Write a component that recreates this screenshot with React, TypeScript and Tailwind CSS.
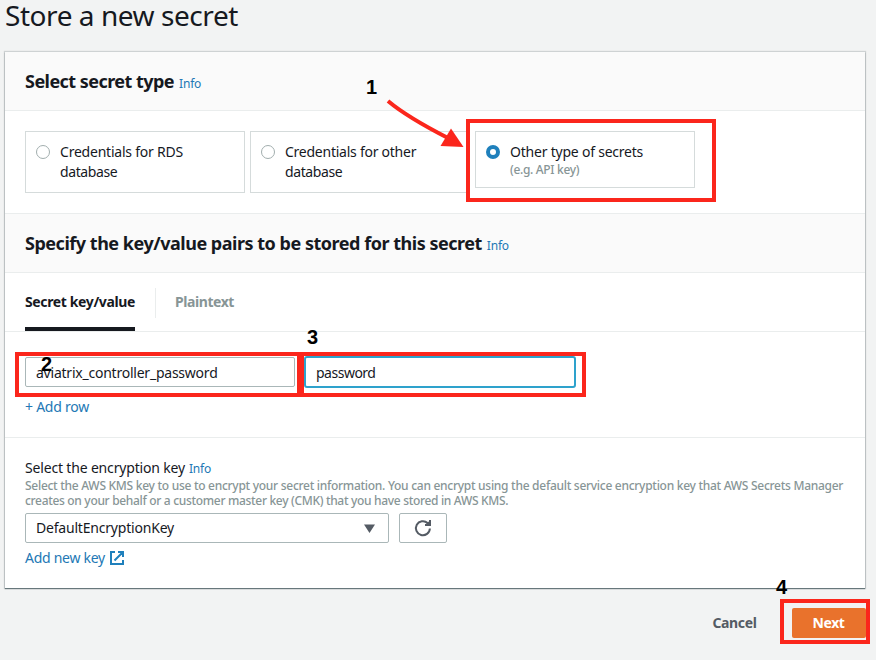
import type { ReactNode } from 'react';

function Info() {
  return <a className="text-[12px] font-normal tracking-[-0.2px] text-[#2378b5]">Info</a>;
}

function Radio({ checked = false }: { checked?: boolean }) {
  return (
    <span
      className={
        checked
          ? 'mt-[3px] size-3.5 shrink-0 rounded-full border-[4.5px] border-[#1f80bc] bg-white'
          : 'mt-[3px] size-3.5 shrink-0 rounded-full border border-[#a2aeae] bg-white'
      }
    />
  );
}

function SectionHeader({ children }: { children: ReactNode }) {
  return (
    <div className="flex h-[59px] items-baseline gap-[5px] border-b border-[#eaeded] bg-[#fafafa] pt-[15px] pl-5 leading-[28px]">
      {children}
    </div>
  );
}

// Numbered callout placed over the page.
function Marker({ n, className }: { n: number; className: string }) {
  return (
    <span className={`absolute font-['Liberation_Sans',Arial,sans-serif] text-[20px] leading-[20px] font-bold text-black ${className}`}>
      {n}
    </span>
  );
}

function Highlight({ className }: { className: string }) {
  return <div className={`pointer-events-none absolute border-4 border-[#fb261c] ${className}`} />;
}

export default function App() {
  return (
    <div className="relative h-[660px] w-[876px] overflow-hidden bg-[#f2f3f3] pl-[5px] font-['Noto_Sans','Open_Sans',sans-serif] text-[14px] whitespace-nowrap text-[#16191f]">
      <h1 className="h-[52px] text-[28px] leading-[31px] tracking-[-0.44px]">Store a new secret</h1>

      <main className="h-[536px] w-[860px] bg-white shadow-[0_1px_1px_0_rgba(0,28,36,0.5),0_0_1px_1px_rgba(0,28,36,0.15)]">
        <SectionHeader>
          <h2 className="text-[18px] font-bold tracking-[-0.54px]">Select secret type</h2>
          <Info />
        </SectionHeader>

        <div className="flex h-[103px] items-start gap-[5px] border-b border-[#eaeded] pt-5 pl-5 leading-5">
          <div className="flex h-[62px] w-[220px] gap-2.5 border border-[#d5dbdb] pt-[10px] pl-[10px]">
            <Radio />
            <p className="tracking-[-0.22px]">
              Credentials for RDS
              <br />
              <span className="tracking-[-0.4px]">database</span>
            </p>
          </div>
          <div className="flex h-[62px] w-[220px] gap-2.5 border border-[#d5dbdb] pt-[10px] pl-[10px]">
            <Radio />
            <p className="tracking-[-0.25px]">
              Credentials for other
              <br />
              <span className="tracking-[-0.4px]">database</span>
            </p>
          </div>
          <div className="flex h-[57px] w-[220px] gap-2.5 border border-[#d5dbdb] pt-[10px] pl-[10px]">
            <Radio checked />
            <div>
              <p className="tracking-[-0.22px]">Other type of secrets</p>
              <p className="text-[12px] leading-4 font-medium tracking-[-0.32px] text-[#879596]">(e.g. API key)</p>
            </div>
          </div>
        </div>

        <SectionHeader>
          <h2 className="text-[18px] font-bold tracking-[-0.48px]">
            Specify the key/value pairs to be stored for this secret
          </h2>
          <Info />
        </SectionHeader>

        <div className="flex h-[59px] border-b border-[#eaeded] pl-5 font-bold">
          <div className="h-[58px] w-[110px] border-b-4 border-[#16191f] pt-[19px] leading-5 tracking-[-0.37px]">
            Secret key/value
          </div>
          <div className="mt-[15px] ml-5 h-[30px] border-l border-[#eaeded] pt-1 pl-[19px] leading-5 tracking-[-0.43px] text-[#879596]">
            Plaintext
          </div>
        </div>

        <div className="h-[106px] border-b border-[#eaeded] pt-6 pl-5">
          <div className="flex items-center gap-[9px]">
            <div className="h-[30px] w-[270px] rounded-[2px] border border-[#aab7b8] pl-[10px] leading-[29px] tracking-[-0.23px]">
              aviatrix_controller_password
            </div>
            <div className="h-8 w-[272px] rounded-[3px] border-2 border-[#2ea2cc] pl-[10px] leading-[29px] tracking-[-0.5px]">
              password
            </div>
          </div>
          <a className="mt-[9px] block leading-5 tracking-[-0.24px] text-[#2378b5]">+ Add row</a>
        </div>

        <div className="pt-5 pl-5">
          <div className="flex h-5 items-baseline gap-1 leading-5">
            <span className="tracking-[-0.17px]">Select the encryption key</span>
            <Info />
          </div>
          <p className="text-[12px] leading-[15px] font-medium text-[#879596]">
            <span className="tracking-[-0.28px]">
              Select the AWS KMS key to use to encrypt your secret information. You can encrypt using the default service encryption key that AWS Secrets Manager
            </span>
            <br />
            <span className="tracking-[-0.32px]">
              creates on your behalf or a customer master key (CMK) that you have stored in AWS KMS.
            </span>
          </p>
          <div className="mt-[5px] flex gap-2.5">
            <div className="flex h-[30px] w-[364px] items-center justify-between rounded-[2px] border border-[#aab7b8] pr-[13px] pl-[10px] leading-[28px] tracking-[-0.2px]">
              <span>DefaultEncryptionKey</span>
              <svg width="11" height="9" viewBox="0 0 11 9" fill="#545b64">
                <path d="M0 0.5h11L5.5 9z" />
              </svg>
            </div>
            <div className="flex h-[30px] w-12 items-center justify-center rounded-[2px] border border-[#aab7b8]">
              <svg width="18" height="18" viewBox="0 0 18 18" fill="none" stroke="#545b64" strokeWidth="2">
                <path d="M15.900 9.500A7 7 0 1 1 13.600 4L15.500 6" />
                <path d="M11 6H16V1" />
                <path d="M12.500 4.500 16 1.500V6H11z" fill="#545b64" stroke="none" />
              </svg>
            </div>
          </div>
          <a className="mt-[5px] flex items-center gap-[5px] leading-5 tracking-[-0.27px] text-[#2378b5]">
            Add new key
            <svg width="14" height="14" viewBox="0 0 14 14" fill="none" stroke="#1f80bc" strokeWidth="2">
              <path d="M5 1H1v12h12V9M8 1h5v5M13 1 4.5 9.5" />
            </svg>
          </a>
        </div>
      </main>

      <footer className="mt-5 flex w-[861px] items-center justify-end gap-[35.5px] font-bold">
        <span className="-mt-0.5 tracking-[-0.37px] text-[#545b64]">Cancel</span>
        <button className="h-[30px] w-[74px] rounded-[2px] bg-[#e9722c] pr-px pb-0.5 font-bold tracking-[-0.4px] text-white">Next</button>
      </footer>

      <Highlight className="top-[119px] left-[466px] h-[83px] w-[250px]" />
      <Highlight className="top-[352px] left-[15px] h-[45px] w-[286px]" />
      <Highlight className="top-[352px] left-[300px] h-[45px] w-[286px]" />
      <Highlight className="top-[599px] left-[780px] h-[45px] w-[90px]" />
      <svg className="absolute top-[95px] left-[380px]" width="90" height="60" viewBox="380 95 90 60">
        <path d="M388 101Q407 117 448 138" fill="none" stroke="#fb261c" strokeWidth="4" />
        <path d="M451 128.5 463.500 147 440.500 146z" fill="#fb261c" />
      </svg>
      <Marker n={1} className="top-[77px] left-[366px]" />
      <Marker n={2} className="top-[354px] left-[41px]" />
      <Marker n={3} className="top-[327px] left-[307px]" />
      <Marker n={4} className="top-[577px] left-[776px]" />
    </div>
  );
}
